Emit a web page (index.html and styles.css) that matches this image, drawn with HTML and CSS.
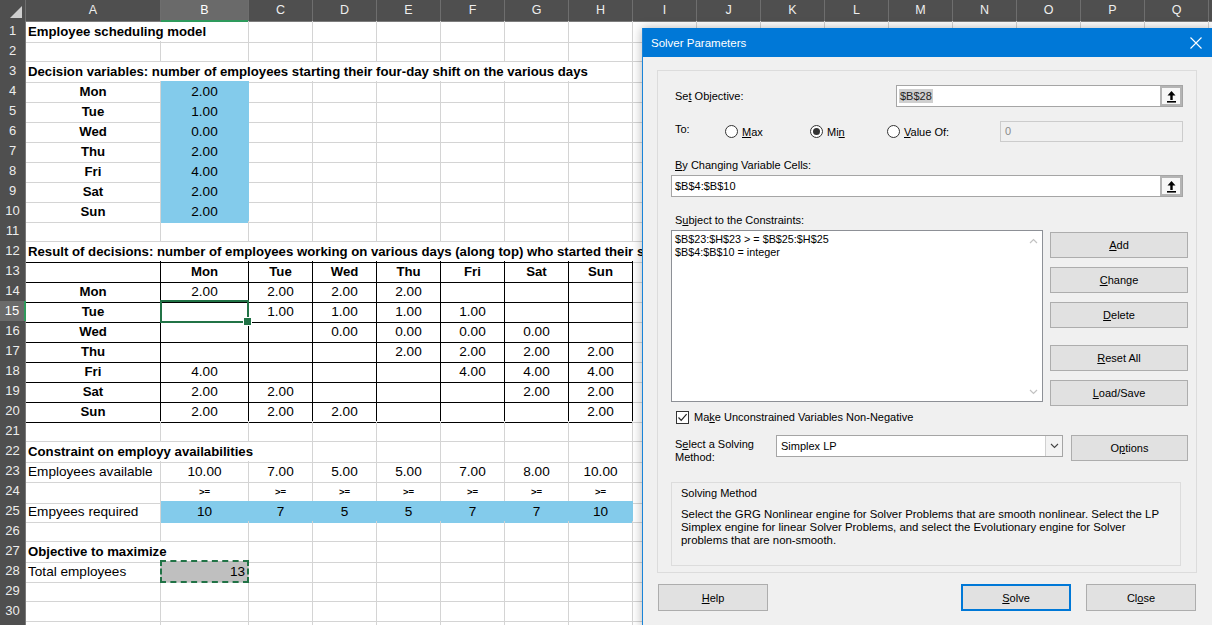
FILE: index.html
```html
<!DOCTYPE html>
<html>
<head>
<meta charset="utf-8">
<title>Solver</title>
<link rel="stylesheet" href="styles.css">
</head>
<body>
<div class="sheet">
  <div class="row hdr">
    <div class="corner"><svg width="26" height="21" viewBox="0 0 26 21"><polygon points="22,6 22,18 10,18" fill="#cfcfcf"/></svg></div>
    <div>A</div><div class="hsel">B</div><div>C</div><div>D</div><div>E</div><div>F</div><div>G</div><div>H</div>
    <div class="fill hfill"><span>I</span><span>J</span><span>K</span><span>L</span><span>M</span><span>N</span><span>O</span><span>P</span><span>Q</span><span></span></div>
  </div>
  <div class="row"><div class="rh">1</div><div class="b nr">Employee scheduling model</div><div></div><div></div><div></div><div></div><div></div><div></div><div></div><div class="fill"></div></div>
  <div class="row"><div class="rh">2</div><div></div><div></div><div></div><div></div><div></div><div></div><div></div><div></div><div class="fill"></div></div>
  <div class="row"><div class="rh">3</div><div class="b nr">Decision variables: number of employees starting their four-day shift on the various days</div><div class="nr"></div><div class="nr"></div><div class="nr"></div><div class="nr"></div><div class="nr"></div><div class="nr"></div><div></div><div class="fill"></div></div>
  <div class="row"><div class="rh">4</div><div class="b c">Mon</div><div class="c blue">2.00</div><div></div><div></div><div></div><div></div><div></div><div></div><div class="fill"></div></div>
  <div class="row"><div class="rh">5</div><div class="b c">Tue</div><div class="c blue">1.00</div><div></div><div></div><div></div><div></div><div></div><div></div><div class="fill"></div></div>
  <div class="row"><div class="rh">6</div><div class="b c">Wed</div><div class="c blue">0.00</div><div></div><div></div><div></div><div></div><div></div><div></div><div class="fill"></div></div>
  <div class="row"><div class="rh">7</div><div class="b c">Thu</div><div class="c blue">2.00</div><div></div><div></div><div></div><div></div><div></div><div></div><div class="fill"></div></div>
  <div class="row"><div class="rh">8</div><div class="b c">Fri</div><div class="c blue">4.00</div><div></div><div></div><div></div><div></div><div></div><div></div><div class="fill"></div></div>
  <div class="row"><div class="rh">9</div><div class="b c">Sat</div><div class="c blue">2.00</div><div></div><div></div><div></div><div></div><div></div><div></div><div class="fill"></div></div>
  <div class="row"><div class="rh">10</div><div class="b c">Sun</div><div class="c blue">2.00</div><div></div><div></div><div></div><div></div><div></div><div></div><div class="fill"></div></div>
  <div class="row"><div class="rh">11</div><div></div><div></div><div></div><div></div><div></div><div></div><div></div><div></div><div class="fill"></div></div>
  <div class="row"><div class="rh">12</div><div class="b nr bb">Result of decisions: number of employees working on various days (along top) who started their shift on various days (along side)</div><div class="nr bb"></div><div class="nr bb"></div><div class="nr bb"></div><div class="nr bb"></div><div class="nr bb"></div><div class="nr bb"></div><div class="nr bb"></div><div class="fill"></div></div>
  <div class="row"><div class="rh">13</div><div class="t"></div><div class="t b c">Mon</div><div class="t b c">Tue</div><div class="t b c">Wed</div><div class="t b c">Thu</div><div class="t b c">Fri</div><div class="t b c">Sat</div><div class="t b c">Sun</div><div class="fill"></div></div>
  <div class="row"><div class="rh">14</div><div class="t b c">Mon</div><div class="t c">2.00</div><div class="t c">2.00</div><div class="t c">2.00</div><div class="t c">2.00</div><div class="t c"></div><div class="t c"></div><div class="t c"></div><div class="fill"></div></div>
  <div class="row"><div class="rh rsel">15</div><div class="t b c">Tue</div><div class="t c sel"></div><div class="t c">1.00</div><div class="t c">1.00</div><div class="t c">1.00</div><div class="t c">1.00</div><div class="t c"></div><div class="t c"></div><div class="fill"></div></div>
  <div class="row"><div class="rh">16</div><div class="t b c">Wed</div><div class="t c"></div><div class="t c"></div><div class="t c">0.00</div><div class="t c">0.00</div><div class="t c">0.00</div><div class="t c">0.00</div><div class="t c"></div><div class="fill"></div></div>
  <div class="row"><div class="rh">17</div><div class="t b c">Thu</div><div class="t c"></div><div class="t c"></div><div class="t c"></div><div class="t c">2.00</div><div class="t c">2.00</div><div class="t c">2.00</div><div class="t c">2.00</div><div class="fill"></div></div>
  <div class="row"><div class="rh">18</div><div class="t b c">Fri</div><div class="t c">4.00</div><div class="t c"></div><div class="t c"></div><div class="t c"></div><div class="t c">4.00</div><div class="t c">4.00</div><div class="t c">4.00</div><div class="fill"></div></div>
  <div class="row"><div class="rh">19</div><div class="t b c">Sat</div><div class="t c">2.00</div><div class="t c">2.00</div><div class="t c"></div><div class="t c"></div><div class="t c"></div><div class="t c">2.00</div><div class="t c">2.00</div><div class="fill"></div></div>
  <div class="row"><div class="rh">20</div><div class="t b c">Sun</div><div class="t c">2.00</div><div class="t c">2.00</div><div class="t c">2.00</div><div class="t c"></div><div class="t c"></div><div class="t c"></div><div class="t c">2.00</div><div class="fill"></div></div>
  <div class="row"><div class="rh">21</div><div></div><div></div><div></div><div></div><div></div><div></div><div></div><div></div><div class="fill"></div></div>
  <div class="row"><div class="rh">22</div><div class="b nr">Constraint on employy availabilities</div><div class="nr"></div><div></div><div></div><div></div><div></div><div></div><div></div><div class="fill"></div></div>
  <div class="row"><div class="rh">23</div><div>Employees available</div><div class="c">10.00</div><div class="c">7.00</div><div class="c">5.00</div><div class="c">5.00</div><div class="c">7.00</div><div class="c">8.00</div><div class="c">10.00</div><div class="fill"></div></div>
  <div class="row"><div class="rh">24</div><div></div><div class="ge">&gt;=</div><div class="ge">&gt;=</div><div class="ge">&gt;=</div><div class="ge">&gt;=</div><div class="ge">&gt;=</div><div class="ge">&gt;=</div><div class="ge">&gt;=</div><div class="fill"></div></div>
  <div class="row"><div class="rh">25</div><div>Empyees required</div><div class="c blue">10</div><div class="c blue">7</div><div class="c blue">5</div><div class="c blue">5</div><div class="c blue">7</div><div class="c blue">7</div><div class="c blue">10</div><div class="fill"></div></div>
  <div class="row"><div class="rh">26</div><div></div><div></div><div></div><div></div><div></div><div></div><div></div><div></div><div class="fill"></div></div>
  <div class="row"><div class="rh">27</div><div class="b nr">Objective to maximize</div><div></div><div></div><div></div><div></div><div></div><div></div><div></div><div class="fill"></div></div>
  <div class="row"><div class="rh">28</div><div>Total employees</div><div class="rt gray ants">13</div><div></div><div></div><div></div><div></div><div></div><div></div><div class="fill"></div></div>
  <div class="row"><div class="rh">29</div><div></div><div></div><div></div><div></div><div></div><div></div><div></div><div></div><div class="fill"></div></div>
  <div class="row"><div class="rh">30</div><div></div><div></div><div></div><div></div><div></div><div></div><div></div><div></div><div class="fill"></div></div>
  <div class="row"><div class="rh"></div><div></div><div></div><div></div><div></div><div></div><div></div><div></div><div></div><div class="fill"></div></div>
</div>

<div class="dialog">
  <div class="titlebar">
    <span>Solver Parameters</span>
    <svg class="xicon" width="12" height="12" viewBox="0 0 12 12"><path d="M0.5 0.5 L11.5 11.5 M11.5 0.5 L0.5 11.5" stroke="#fff" stroke-width="1.1"/></svg>
  </div>
  <div class="dbody">
    <div class="group">
      <div class="r-obj">
        <div class="lab w-obj">Se<u>t</u> Objective:</div>
        <div class="tbox obj-box"><span class="seltext">$B$28</span><span class="refbtn"><svg width="11" height="13" viewBox="0 0 11 13"><path d="M5.5 1 L1.5 5.5 H4.3 V10 H6.7 V5.5 H9.5 Z" fill="#000"/><rect x="1" y="11" width="9" height="1.6" fill="#000"/></svg></span></div>
      </div>
      <div class="r-to">
        <div class="lab w-to">To:</div>
        <div class="radio w-max"><span class="circle"></span><span><u>M</u>ax</span></div>
        <div class="radio w-min"><span class="circle on"></span><span>Mi<u>n</u></span></div>
        <div class="radio w-val"><span class="circle"></span><span><u>V</u>alue Of:</span></div>
        <div class="valbox">0</div>
      </div>
      <div class="lab lab2"><u>B</u>y Changing Variable Cells:</div>
      <div class="tbox full-box"><span class="plain">$B$4:$B$10</span><span class="refbtn"><svg width="11" height="13" viewBox="0 0 11 13"><path d="M5.5 1 L1.5 5.5 H4.3 V10 H6.7 V5.5 H9.5 Z" fill="#000"/><rect x="1" y="11" width="9" height="1.6" fill="#000"/></svg></span></div>
      <div class="lab lab2">S<u>u</u>bject to the Constraints:</div>
      <div class="cons">
        <div class="listbox">
          <div class="items">
            <div class="item">$B$23:$H$23 &gt; = $B$25:$H$25</div>
            <div class="item">$B$4:$B$10 = integer</div>
          </div>
          <div class="vscroll">
            <svg width="9" height="6" viewBox="0 0 9 6"><path d="M1 5 L4.5 1.5 L8 5" fill="none" stroke="#c2c2c2" stroke-width="1.2"/></svg>
            <svg width="9" height="6" viewBox="0 0 9 6"><path d="M1 1 L4.5 4.5 L8 1" fill="none" stroke="#c2c2c2" stroke-width="1.2"/></svg>
          </div>
        </div>
        <div class="sidebtns">
          <div class="btn b-add"><u>A</u>dd</div>
          <div class="btn b-gap"><u>C</u>hange</div>
          <div class="btn b-gap"><u>D</u>elete</div>
          <div class="btn b-gap2"><u>R</u>eset All</div>
          <div class="btn b-gap"><u>L</u>oad/Save</div>
        </div>
      </div>
      <div class="chk-row">
        <span class="chk"><svg width="11" height="11" viewBox="0 0 11 11"><path d="M1.5 5.5 L4.2 8.3 L9.6 2.2" fill="none" stroke="#222" stroke-width="1.2"/></svg></span>
        <span>Ma<u>k</u>e Unconstrained Variables Non-Negative</span>
      </div>
      <div class="method-row">
        <div class="lab w-meth">S<u>e</u>lect a Solving<br>Method:</div>
        <div class="combo"><span class="combo-text">Simplex LP</span><span class="combo-arrow"><svg width="9" height="6" viewBox="0 0 9 6"><path d="M1 1 L4.5 4.5 L8 1" fill="none" stroke="#444" stroke-width="1.1"/></svg></span></div>
        <div class="btn b-opt">O<u>p</u>tions</div>
      </div>
      <div class="methodbox">
        <div class="mtitle">Solving Method</div>
        <div class="mdesc">Select the GRG Nonlinear engine for Solver Problems that are smooth nonlinear. Select the LP Simplex engine for linear Solver Problems, and select the Evolutionary engine for Solver problems that are non-smooth.</div>
      </div>
    </div>
    <div class="footer">
      <div class="btn fbtn"><u>H</u>elp</div>
      <div class="btn fbtn solve"><u>S</u>olve</div>
      <div class="btn fbtn close">Cl<u>o</u>se</div>
    </div>
  </div>
</div>
</body>
</html>
```

FILE: styles.css
```css
* { box-sizing: border-box; margin: 0; padding: 0; }
html, body { width: 1212px; height: 625px; overflow: hidden; background: #fff; }
body { position: relative; font-family: "Liberation Sans", Arial, sans-serif; }

/* ---------- spreadsheet ---------- */
.sheet { width: 1212px; height: 625px; overflow: hidden; }
.row {
  display: grid;
  grid-template-columns: 26px 135px 88px repeat(6, 64px) 1fr;
  height: 20px;
}
.row > div {
  border-right: 1px solid #d4d4d4;
  border-bottom: 1px solid #d4d4d4;
  white-space: nowrap;
  line-height: 21px;
  font-size: 13.6px;
  color: #000;
  padding: 0 2px;
}
.row > .fill {
  border-right: 0;
  background: repeating-linear-gradient(to right, transparent 0 63px, #d4d4d4 63px 64px);
}
.row > .rh {
  background: #4f4f4f;
  color: #ececec;
  border-right: 1px solid #7a7a7a;
  border-bottom: 1px solid #686868;
  text-align: center;
  font-size: 13px;
  line-height: 20px;
  padding: 0;
}
.row > .rh.rsel {
  background: #6b6b6b;
  color: #fff;
  border-right: 2px solid #2e9a5c;
}
.hdr { height: 21px; }
.hdr > div {
  background: #4f4f4f;
  color: #eeeeee;
  border-right: 1px solid #6e6e6e;
  border-bottom: 1px solid #7c7c7c;
  text-align: center;
  line-height: 20px;
  font-size: 12.5px;
  padding: 0;
}
.hdr > .corner { padding: 0; line-height: 0; }
.hdr > .hsel { background: #6a6a6a; border-bottom: 2px solid #2e9a5c; color: #fff; }
.hdr > .hfill { display: flex; background: #4f4f4f; }
.hfill span {
  flex: 0 0 64px;
  border-right: 1px solid #6e6e6e;
  text-align: center;
}

.row > .b { font-weight: bold; font-size: 13.2px; }
.row > .c { text-align: center; }
.row > .rt { text-align: right; padding-right: 3px; }
.row > .nr { border-right-color: transparent; }
.row > .bb { border-bottom-color: #000; }
.row > .t { border-right-color: #000; border-bottom-color: #000; }
.row > .blue { background: #83cbeb; border-color: #83cbeb; }
.row > .gray { background: #bfbfbf; }
.row > .ge { text-align: center; font-size: 9.5px; font-weight: bold; line-height: 22px; }

.row > .sel { position: relative; }
.row > .sel::after {
  content: "";
  position: absolute;
  left: -1px; top: -1px; right: -1px; bottom: -1px;
  border: 2px solid #217346;
}
.row > .sel::before {
  content: "";
  position: absolute;
  right: -4px; bottom: -4px;
  width: 7px; height: 7px;
  background: #217346;
  border: 1px solid #fff;
  z-index: 2;
}
.row > .ants { position: relative; }
.row > .ants::after {
  content: "";
  position: absolute;
  left: -1px; top: -1px; right: -1px; bottom: -1px;
  border: 2px dashed #217346;
}

/* ---------- dialog ---------- */
.dialog {
  position: absolute;
  left: 642px; top: 28px;
  width: 571px; height: 600px;
  background: #f0f0f0;
  border-left: 1px solid #1a84d8;
  box-shadow: 0 0 10px rgba(0, 0, 0, 0.3);
  font-family: "Liberation Sans", Arial, sans-serif;
  font-size: 11px;
  color: #000;
}
.titlebar {
  height: 29px;
  background: #0078d7;
  color: #fff;
  display: flex;
  align-items: center;
  justify-content: space-between;
  padding: 0 11px 0 8px;
  font-size: 11.5px;
}
.xicon { display: block; }
.dbody { padding: 13px 0 0 14px; }
.group {
  width: 540px;
  height: 503px;
  border: 1px solid #dcdcdc;
  padding: 14px 0 0 13px;
}
u { text-decoration: underline; text-underline-offset: 1px; }
.lab { padding-left: 4px; }

.r-obj { display: flex; align-items: center; height: 22px; }
.w-obj { width: 225px; }
.tbox {
  height: 22px;
  border: 1px solid #a5a5a5;
  background: #fff;
  display: flex;
  align-items: center;
  justify-content: space-between;
}
.obj-box { width: 287px; }
.seltext { background: #cfcfcf; color: #222; margin-left: 2px; padding: 0 1px; line-height: 14px; }
.plain { margin-left: 3px; }
.refbtn {
  width: 22px; height: 20px;
  border: 2px solid #b4b4b4;
  background: #f7f7f7;
  display: flex; align-items: center; justify-content: center;
}
.refbtn svg { display: block; }

.r-to { display: flex; align-items: center; height: 21px; margin-top: 14px; }
.w-to { width: 54px; align-self: flex-start; padding-top: 2px; }
.radio { display: flex; align-items: center; gap: 4px; }
.w-max { width: 85px; }
.w-min { width: 77px; }
.w-val { width: 113px; }
.circle {
  width: 13px; height: 13px;
  border: 1px solid #333;
  border-radius: 50%;
  background: #fff;
  display: flex; align-items: center; justify-content: center;
}
.circle.on::after {
  content: "";
  width: 7px; height: 7px;
  border-radius: 50%;
  background: #333;
}
.valbox {
  width: 183px; height: 21px;
  border: 1px solid #cccccc;
  background: #f0f0f0;
  color: #8a8a8a;
  padding-left: 4px;
  line-height: 19px;
}

.lab2 { margin-top: 16px; height: 14px; line-height: 14px; }
.full-box { width: 512px; margin-top: 3px; }

.cons { display: flex; align-items: flex-start; height: 172px; margin-top: 3px; }
.listbox {
  width: 372px; height: 172px;
  border: 1px solid #8d9096;
  background: #fff;
  display: flex;
}
.items { flex: 1; padding: 2px 3px; }
.item { height: 13px; line-height: 13px; font-size: 10.8px; }
.vscroll {
  width: 17px;
  display: flex;
  flex-direction: column;
  justify-content: space-between;
  align-items: center;
  padding: 7px 0 6px;
}
.vscroll svg { display: block; }
.sidebtns { margin-left: 7px; width: 138px; display: flex; flex-direction: column; }
.btn {
  background: #e1e1e1;
  border: 1px solid #adadad;
  height: 26px;
  display: flex; align-items: center; justify-content: center;
  flex: none;
}
.b-add { margin-top: 2px; }
.b-gap { margin-top: 9px; }
.b-gap2 { margin-top: 17px; }

.chk-row { display: flex; align-items: center; height: 16px; margin-top: 7px; padding-left: 5px; gap: 5px; }
.chk {
  width: 13px; height: 13px;
  border: 1px solid #333;
  background: #fff;
  display: flex; align-items: center; justify-content: center;
}
.chk svg { display: block; }

.method-row { display: flex; margin-top: 10px; height: 26px; }
.w-meth { width: 105px; line-height: 13px; padding-top: 3px; }
.combo {
  width: 287px; height: 22px;
  border: 1px solid #a5a5a5;
  background: #fff;
  display: flex;
}
.combo-text { flex: 1; padding-left: 4px; line-height: 20px; }
.combo-arrow {
  width: 17px;
  border-left: 1px solid #d0d0d0;
  background: #f3f3f3;
  display: flex; align-items: center; justify-content: center;
}
.combo-arrow svg { display: block; }
.b-opt { width: 117px; margin-left: 8px; }

.methodbox {
  margin-top: 21px;
  width: 510px; height: 84px;
  border: 1px solid #dcdcdc;
  padding: 4px 9px;
  line-height: 13px;
}
.mdesc { margin-top: 8px; font-size: 11.4px; }

.footer { display: flex; margin-top: 11px; padding-right: 17px; margin-left: 1px; }
.fbtn { width: 110px; height: 27px; }
.solve { margin-left: auto; border: 2px solid #0078d7; }
.close { margin-left: 15px; }
```
